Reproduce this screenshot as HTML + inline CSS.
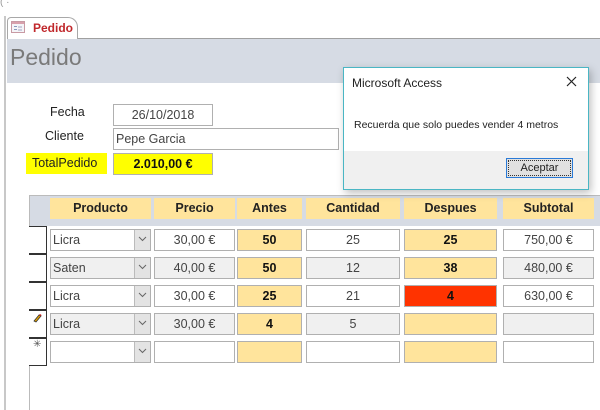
<!DOCTYPE html>
<html><head><meta charset="utf-8"><style>
*{margin:0;padding:0;box-sizing:border-box}
body{width:600px;height:410px;overflow:hidden;background:#fff;font-family:"Liberation Sans",sans-serif;position:relative;font-size:12px;color:#222}
.a{position:absolute}
.box{position:absolute;border:1px solid #b0b0b0;background:#fff;height:22px;line-height:20px;text-align:center;color:#444;font-size:12.5px}
.g{background:#f0f0f0}
.y{background:#ffe49c}
.b{font-weight:bold;color:#111}
.hd{position:absolute;top:198px;height:21px;line-height:21px;background:#ffe49c;text-align:center;font-weight:bold;font-size:12.5px;color:#222}
.sel{position:absolute;left:29px;width:18px;border:1px solid #333;border-left:none;background:#fff;height:28px}
.dd{position:absolute;width:16px;height:20px;top:0;right:0;background:#e3e3e3;border-left:1px solid #bbb}
.dd svg{position:absolute;left:3px;top:6px}
</style></head><body>
<div class="a" style="left:0;top:0;width:20px;height:8px;color:#999;font-size:10px;line-height:6px">( ·</div>
<div class="a" style="left:4px;top:16px;width:2px;height:394px;background:#c8c8c8"></div>
<div class="a" style="left:7px;top:38px;width:593px;height:1px;background:#a0a0a0"></div>
<div class="a" style="left:7px;top:17px;width:71px;height:22px;border:1px solid #a8a8a8;border-bottom:none;border-radius:4px 10px 0 0;background:#fff"></div>
<svg class="a" style="left:11px;top:21px" width="14" height="12"><rect x="0.5" y="0.5" width="13" height="11" fill="#f4f4f8" stroke="#c89aa4"/><rect x="1" y="1" width="12" height="2" fill="#d8a0ac"/><rect x="3" y="5" width="3" height="1" fill="#8899bb"/><rect x="7" y="5" width="4" height="2" fill="#ccd"/><rect x="3" y="8" width="3" height="1" fill="#8899bb"/><rect x="7" y="8" width="4" height="2" fill="#ccd"/></svg>
<div class="a" style="left:33px;top:21px;color:#c0282c;font-weight:bold;font-size:12px">Pedido</div>
<div class="a" style="left:7px;top:39px;width:593px;height:44px;background:#d6dbe4"></div>
<div class="a" style="left:10px;top:44px;font-size:23px;color:#7a7a7a">Pedido</div>
<div class="a" style="left:50px;top:105px;font-size:12.5px">Fecha</div>
<div class="box" style="left:113px;top:104px;width:100px">26/10/2018</div>
<div class="a" style="left:45px;top:129px;font-size:12.5px">Cliente</div>
<div class="box" style="left:113px;top:128px;width:226px;text-align:left;padding-left:2px">Pepe Garcia</div>
<div class="a" style="left:26px;top:153px;width:81px;height:21px;background:#ffff00;line-height:20px;padding-left:6px;font-size:12.5px">TotalPedido</div>
<div class="box b" style="left:113px;top:153px;width:100px;background:#ffff00">2.010,00 €</div>

<div class="a" style="left:29px;top:195px;width:571px;height:215px;border:1px solid #bbb;border-right:none;border-bottom:none"></div>
<div class="a" style="left:30px;top:196px;width:570px;height:30px;background:#d6dbe4"></div>
<div class="hd" style="left:50px;width:101px">Producto</div>
<div class="hd" style="left:154px;width:81px">Precio</div>
<div class="hd" style="left:237px;width:65px">Antes</div>
<div class="hd" style="left:306px;width:94px">Cantidad</div>
<div class="hd" style="left:404px;width:93px">Despues</div>
<div class="hd" style="left:503px;width:91px">Subtotal</div>

<div class="sel" style="top:226px"></div>
<div class="sel" style="top:254px"></div>
<div class="sel" style="top:282px"></div>
<div class="sel" style="top:310px"><svg class="a" style="left:3px;top:2px" width="10" height="10"><path d="M2 8 L7 2 L9 3 L4 9 Z" fill="#e0a000" stroke="#333" stroke-width="0.8"/><path d="M7 2 L8 1 L9.5 2 L9 3Z" fill="#d02020"/></svg></div>
<div class="sel" style="top:338px"><span style="position:absolute;left:4px;top:0;font-size:10px;color:#555">✳</span></div>

<!-- row1 -->
<div class="box" style="left:50px;top:229px;width:101px;text-align:left;padding-left:2px">Licra<div class="dd"><svg width="9" height="6"><path d="M1 1 L4.5 4.5 L8 1" fill="none" stroke="#666"/></svg></div></div>
<div class="box" style="left:154px;top:229px;width:81px">30,00 €</div>
<div class="box y b" style="left:237px;top:229px;width:65px">50</div>
<div class="box" style="left:306px;top:229px;width:94px">25</div>
<div class="box y b" style="left:404px;top:229px;width:93px">25</div>
<div class="box" style="left:503px;top:229px;width:91px">750,00 €</div>
<!-- row2 -->
<div class="box g" style="left:50px;top:257px;width:101px;text-align:left;padding-left:2px">Saten<div class="dd"><svg width="9" height="6"><path d="M1 1 L4.5 4.5 L8 1" fill="none" stroke="#666"/></svg></div></div>
<div class="box g" style="left:154px;top:257px;width:81px">40,00 €</div>
<div class="box y b" style="left:237px;top:257px;width:65px">50</div>
<div class="box g" style="left:306px;top:257px;width:94px">12</div>
<div class="box y b" style="left:404px;top:257px;width:93px">38</div>
<div class="box g" style="left:503px;top:257px;width:91px">480,00 €</div>
<!-- row3 -->
<div class="box" style="left:50px;top:285px;width:101px;text-align:left;padding-left:2px">Licra<div class="dd"><svg width="9" height="6"><path d="M1 1 L4.5 4.5 L8 1" fill="none" stroke="#666"/></svg></div></div>
<div class="box" style="left:154px;top:285px;width:81px">30,00 €</div>
<div class="box y b" style="left:237px;top:285px;width:65px">25</div>
<div class="box" style="left:306px;top:285px;width:94px">21</div>
<div class="box b" style="left:404px;top:285px;width:93px;background:#ff3300">4</div>
<div class="box" style="left:503px;top:285px;width:91px">630,00 €</div>
<!-- row4 -->
<div class="box g" style="left:50px;top:313px;width:101px;text-align:left;padding-left:2px">Licra<div class="dd"><svg width="9" height="6"><path d="M1 1 L4.5 4.5 L8 1" fill="none" stroke="#666"/></svg></div></div>
<div class="box g" style="left:154px;top:313px;width:81px">30,00 €</div>
<div class="box y b" style="left:237px;top:313px;width:65px">4</div>
<div class="box g" style="left:306px;top:313px;width:94px">5</div>
<div class="box y" style="left:404px;top:313px;width:93px"></div>
<div class="box g" style="left:503px;top:313px;width:91px"></div>
<!-- row5 -->
<div class="box" style="left:50px;top:341px;width:101px"><div class="dd"><svg width="9" height="6"><path d="M1 1 L4.5 4.5 L8 1" fill="none" stroke="#666"/></svg></div></div>
<div class="box" style="left:154px;top:341px;width:81px"></div>
<div class="box y" style="left:237px;top:341px;width:65px"></div>
<div class="box" style="left:306px;top:341px;width:94px"></div>
<div class="box y" style="left:404px;top:341px;width:93px"></div>
<div class="box" style="left:503px;top:341px;width:91px"></div>

<!-- dialog -->
<div class="a" style="left:343px;top:67px;width:246px;height:123px;border:1px solid #4ab6c4;background:#fff;box-shadow:2px 3px 8px rgba(0,0,0,.25)">
<div class="a" style="left:8px;top:8px;font-size:12px;color:#222">Microsoft Access</div>
<svg class="a" style="left:222px;top:8px" width="11" height="11"><path d="M1 1 L10 10 M10 1 L1 10" stroke="#222" stroke-width="1.2"/></svg>
<div class="a" style="left:10px;top:51px;font-size:10.5px;color:#222">Recuerda que solo puedes vender 4 metros</div>
<div class="a" style="left:0;top:83px;width:244px;height:38px;background:#f0f0f0"></div>
<div class="a" style="left:162px;top:90px;width:67px;height:20px;border:1px solid #2a7ad6;background:#e1e1e1;text-align:center;line-height:18px;font-size:11px;outline:1px dotted #333;outline-offset:-3px">Aceptar</div>
</div>
</body></html>
